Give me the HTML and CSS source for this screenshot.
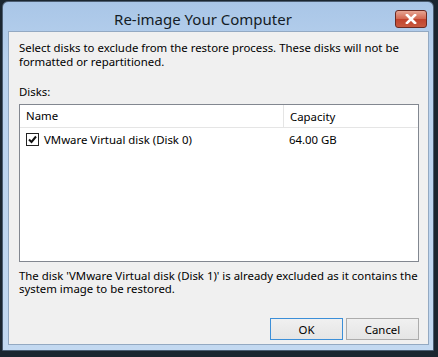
FILE: index.html
```html
<!DOCTYPE html>
<html>
<head>
<meta charset="utf-8">
<link rel="stylesheet" href="styles.css">
</head>
<body>
<div class="window">
  <div class="titlebar">
    <div class="title">Re-image Your Computer</div>
    <div class="close">
      <svg width="14" height="10" viewBox="0 0 14 10"><path d="M3 1 L11 9 M11 1 L3 9" stroke="#fff" stroke-width="2.6" stroke-linecap="square"/></svg>
    </div>
  </div>
  <div class="client">
    <p class="intro">Select disks to exclude from the restore process. These disks will not be formatted or repartitioned.</p>
    <div class="label">Disks:</div>
    <div class="listbox">
      <div class="header">
        <div class="col-name">Name</div>
        <div class="col-cap">Capacity</div>
      </div>
      <div class="row">
        <div class="col-name cell">
          <span class="check"><svg width="11" height="11" viewBox="0 0 11 11"><path d="M2 5.5 L4.5 8 L9 2.5" fill="none" stroke="#111" stroke-width="2"/></svg></span>
          VMware Virtual disk (Disk 0)
        </div>
        <div class="col-cap cell">64.00 GB</div>
      </div>
    </div>
    <p class="note">The disk 'VMware Virtual disk (Disk 1)' is already excluded as it contains the system image to be restored.</p>
    <div class="buttons">
      <button class="btn default">OK</button>
      <button class="btn">Cancel</button>
    </div>
  </div>
</div>
</body>
</html>
```
FILE: styles.css
```css
html, body {
  margin: 0;
  padding: 0;
}
body {
  width: 438px;
  height: 357px;
  background: #1b2630;
  overflow: hidden;
  font-family: "Noto Sans", "Open Sans", sans-serif;
  font-size: 11.4px;
  color: #000;
}
.window {
  margin: 1px 2px 0 2px;
  width: 430px;
  height: 348px;
  border: 1px solid #4b5d72;
  border-radius: 6px 6px 0 0;
  background: linear-gradient(#a9c6e7, #b9d2ee 60px, #c3d9f1);
  display: flex;
  flex-direction: column;
}
.titlebar {
  height: 29px;
  position: relative;
  display: flex;
  align-items: center;
  justify-content: center;
}
.title {
  font-size: 15px;
  color: #141c26;
  margin-left: -30px;
  margin-top: 4px;
}
.close {
  position: absolute;
  right: 6px;
  top: 8px;
  width: 30px;
  height: 16px;
  border: 1px solid #6b2a22;
  border-radius: 3px;
  background: linear-gradient(#e6a593, #d2664f 50%, #c1432d 52%, #c85a40);
  display: flex;
  align-items: center;
  justify-content: center;
}
.close svg { display: block; }
.client {
  margin: 0 4px 5px 5px;
  flex: 1;
  background: #f0f0f0;
  border: 1px solid #93a9c2;
  padding: 9px 9px 0 10px;
  display: flex;
  flex-direction: column;
}
.intro {
  margin: 0;
  line-height: 14px;
}
.label {
  margin-top: 16px;
  line-height: 14px;
}
.listbox {
  margin-top: 5px;
  height: 156px;
  background: #fff;
  border: 1px solid #828790;
}
.header {
  display: flex;
  height: 22px;
  border-bottom: 1px solid #e5e5e5;
  align-items: center;
}
.header .col-name {
  border-right: 1px solid #e5e5e5;
  height: 22px;
  line-height: 22px;
}
.col-name {
  width: 257px;
  padding-left: 6px;
}
.col-cap {
  padding-left: 6px;
}
.row {
  display: flex;
  height: 21px;
  align-items: center;
  margin-top: 1px;
}
.cell {
  display: flex;
  align-items: center;
}
.check {
  width: 11px;
  height: 11px;
  border: 1px solid #222;
  background: #fff;
  margin-right: 5px;
  display: inline-flex;
}
.note {
  margin: 7px 0 0 0;
  line-height: 13px;
}
.buttons {
  margin-top: 23px;
  display: flex;
  justify-content: flex-end;
  gap: 3px;
}
.btn {
  width: 73px;
  height: 22px;
  font-family: inherit;
  font-size: 11.4px;
  background: linear-gradient(#f0f0f0, #e5e5e5);
  border: 1px solid #acacac;
  border-radius: 0;
  padding: 0;
  color: #000;
}
.btn.default {
  border-color: #3c8fd8;
}
```
